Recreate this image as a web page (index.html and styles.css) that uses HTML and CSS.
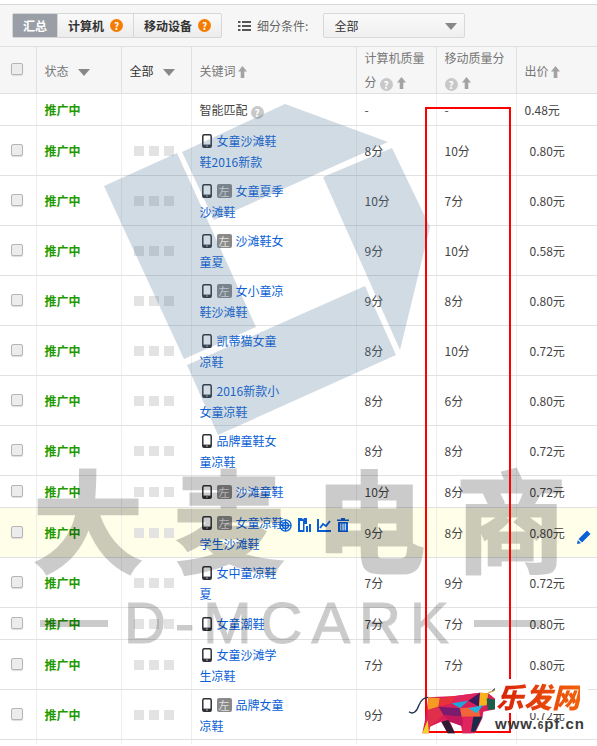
FILE: index.html
```html
<!doctype html>
<html lang="zh-CN">
  <head>
    <meta charset="UTF-8" />
    <title>关键词列表</title>
    <link rel="stylesheet" href="styles.css">
  </head>
  <body>
    <svg class="defs" width="0" height="0">
      <symbol id="phone" viewBox="0 0 10 14">
        <rect x="0.8" y="0.7" width="8.4" height="12.6" rx="1.6" fill="#fff" stroke="#2f3338" stroke-width="1.5" />
        <rect x="0.8" y="10.6" width="8.4" height="2.7" fill="#2f3338" />
        <circle cx="5" cy="12" r="0.7" fill="#ddd" />
      </symbol>
      <symbol id="up" viewBox="0 0 9 12">
        <path d="M4.5 0 9 5.5H6.3V12H2.7V5.5H0z" fill="#a3a3a3" />
      </symbol>
    </svg>

    <div class="toolbar">
      <div class="tabs">
        <span class="tab active">汇总</span>
        <span class="tab">计算机<i class="help orange">?</i></span>
        <span class="tab">移动设备<i class="help orange">?</i></span>
      </div>
      <svg class="list-icon" width="13" height="10" viewBox="0 0 13 10">
        <path d="M0 0h2.5v2H0zM4 0h9v2H4zM0 4h2.5v2H0zM4 4h9v2H4zM0 8h2.5v2H0zM4 8h9v2H4z" fill="#555" />
      </svg>
      <span class="filter-label">细分条件:</span>
      <div class="select">全部<i class="caret"></i></div>
    </div>

    <table class="grid">
      <colgroup>
        <col class="c-check" /><col class="c-status" /><col class="c-all" /><col class="c-word" />
        <col class="c-score" /><col class="c-score" /><col class="c-price" />
      </colgroup>
      <thead>
        <tr>
          <th><span class="check"></span></th>
          <th>状态<i class="caret"></i></th>
          <th class="dark">全部<i class="caret"></i></th>
          <th>关键词<svg class="up"><use href="#up" /></svg></th>
          <th class="tall"><div class="head-wrap">计算机质量分<i class="help grey">?</i><svg class="up"><use href="#up" /></svg></div></th>
          <th class="tall"><div class="head-wrap">移动质量分<br><i class="help grey first">?</i><svg class="up"><use href="#up" /></svg></div></th>
          <th>出价<svg class="up"><use href="#up" /></svg></th>
        </tr>
      </thead>
      <tbody>
        <tr class="short">
          <td></td><td class="status">推广中</td><td></td>
          <td>智能匹配<i class="help grey">?</i></td>
          <td>-</td><td>-</td><td class="first-price">0.48元</td>
        </tr>
        <tr>
          <td><span class="check"></span></td><td class="status">推广中</td>
          <td><div class="dots"><i></i><i></i><i></i></div></td>
          <td><div class="word"><svg class="phone"><use href="#phone" /></svg><a>女童沙滩鞋鞋2016新款</a></div></td>
          <td>8分</td><td>10分</td><td class="price">0.80元</td>
        </tr>
        <tr>
          <td><span class="check"></span></td><td class="status">推广中</td>
          <td><div class="dots"><i></i><i></i><i></i></div></td>
          <td><div class="word"><svg class="phone"><use href="#phone" /></svg><span class="badge">左</span><a>女童夏季沙滩鞋</a></div></td>
          <td>10分</td><td>7分</td><td class="price">0.80元</td>
        </tr>
        <tr>
          <td><span class="check"></span></td><td class="status">推广中</td>
          <td><div class="dots"><i></i><i></i><i></i></div></td>
          <td><div class="word"><svg class="phone"><use href="#phone" /></svg><span class="badge">左</span><a>沙滩鞋女童夏</a></div></td>
          <td>9分</td><td>10分</td><td class="price">0.58元</td>
        </tr>
        <tr>
          <td><span class="check"></span></td><td class="status">推广中</td>
          <td><div class="dots"><i></i><i></i><i></i></div></td>
          <td><div class="word"><svg class="phone"><use href="#phone" /></svg><span class="badge">左</span><a>女小童凉鞋沙滩鞋</a></div></td>
          <td>9分</td><td>8分</td><td class="price">0.80元</td>
        </tr>
        <tr>
          <td><span class="check"></span></td><td class="status">推广中</td>
          <td><div class="dots"><i></i><i></i><i></i></div></td>
          <td><div class="word"><svg class="phone"><use href="#phone" /></svg><a>凯蒂猫女童凉鞋</a></div></td>
          <td>8分</td><td>10分</td><td class="price">0.72元</td>
        </tr>
        <tr>
          <td><span class="check"></span></td><td class="status">推广中</td>
          <td><div class="dots"><i></i><i></i><i></i></div></td>
          <td><div class="word"><svg class="phone"><use href="#phone" /></svg><a>2016新款小女童凉鞋</a></div></td>
          <td>8分</td><td>6分</td><td class="price">0.80元</td>
        </tr>
        <tr>
          <td><span class="check"></span></td><td class="status">推广中</td>
          <td><div class="dots"><i></i><i></i><i></i></div></td>
          <td><div class="word"><svg class="phone"><use href="#phone" /></svg><a>品牌童鞋女童凉鞋</a></div></td>
          <td>8分</td><td>8分</td><td class="price">0.72元</td>
        </tr>
        <tr class="short">
          <td><span class="check"></span></td><td class="status">推广中</td>
          <td><div class="dots"><i></i><i></i><i></i></div></td>
          <td><div class="word"><svg class="phone"><use href="#phone" /></svg><span class="badge">左</span><a>沙滩童鞋</a></div></td>
          <td>10分</td><td>8分</td><td class="price">0.72元</td>
        </tr>
        <tr class="hover">
          <td><span class="check"></span></td><td class="status">推广中</td>
          <td><div class="dots"><i></i><i></i><i></i></div></td>
          <td class="word-cell">
            <div class="word"><svg class="phone"><use href="#phone" /></svg><span class="badge">左</span><a>女童凉鞋学生沙滩鞋</a></div>
            <div class="actions">
              <svg width="13" height="13" viewBox="0 0 13 13" fill="none" stroke="#0b5fd6" stroke-width="1.3"><circle cx="6.5" cy="6.5" r="5.6" /><circle cx="6.5" cy="6.5" r="3" /><path d="M1 6.5h11M6.5 1v11" /></svg>
              <svg width="13" height="14" viewBox="0 0 13 14"><path d="M0 0h4l1 1.5L6 0h3v6H6.500v8H0z" fill="#0b5fd6" /><path d="M2 3h3v9H2z" fill="#fff" /><path d="M8 8h2v6H8zM11 6h2v8h-2z" fill="#0b5fd6" /></svg>
              <svg width="14" height="13" viewBox="0 0 14 13" fill="none" stroke="#0b5fd6"><path d="M1 0v12h13" stroke-width="2" /><path d="M3 9l3-4 3 2 4-5" stroke-width="1.8" /></svg>
              <svg width="12" height="14" viewBox="0 0 12 14"><path d="M4 0h4v1.500h4V3H0V1.500h4zM1 4h10v10H1z" fill="#0b5fd6" /><path d="M3.300 5.500h1v7h-1zM5.500 5.500h1v7h-1zM7.700 5.500h1v7h-1z" fill="#fff" /></svg>
            </div>
          </td>
          <td>9分</td><td>8分</td>
          <td class="price price-cell">0.80元
            <svg class="pencil" width="14" height="14" viewBox="0 0 14 14"><path d="M10 0.500 13.500 4 5 12.500 1.500 9zM0.800 10 4 13.200 0 14z" fill="#0b5fd6" /></svg>
          </td>
        </tr>
        <tr>
          <td><span class="check"></span></td><td class="status">推广中</td>
          <td><div class="dots"><i></i><i></i><i></i></div></td>
          <td><div class="word"><svg class="phone"><use href="#phone" /></svg><a>女中童凉鞋夏</a></div></td>
          <td>7分</td><td>9分</td><td class="price">0.72元</td>
        </tr>
        <tr class="short">
          <td><span class="check"></span></td><td class="status">推广中</td>
          <td><div class="dots"><i></i><i></i><i></i></div></td>
          <td><div class="word"><svg class="phone"><use href="#phone" /></svg><a>女童潮鞋</a></div></td>
          <td>7分</td><td>7分</td><td class="price">0.80元</td>
        </tr>
        <tr>
          <td><span class="check"></span></td><td class="status">推广中</td>
          <td><div class="dots"><i></i><i></i><i></i></div></td>
          <td><div class="word"><svg class="phone"><use href="#phone" /></svg><a>女童沙滩学生凉鞋</a></div></td>
          <td>7分</td><td>7分</td><td class="price">0.80元</td>
        </tr>
        <tr>
          <td><span class="check"></span></td><td class="status">推广中</td>
          <td><div class="dots"><i></i><i></i><i></i></div></td>
          <td><div class="word"><svg class="phone"><use href="#phone" /></svg><span class="badge">左</span><a>品牌女童凉鞋</a></div></td>
          <td>9分</td><td>8分</td><td class="price">0.72元</td>
        </tr>
        <tr class="end">
          <td></td><td></td><td></td><td></td><td></td><td></td><td></td>
        </tr>
      </tbody>
    </table>

    <!-- watermark and annotations that sit on top of the screenshot -->
    <svg class="mark-logo" width="597" height="746" viewBox="0 0 597 746">
      <g fill="#466e93" fill-opacity="0.25">
        <polygon points="104,186 177,153 256,327 184,359" />
        <polygon points="182,152 285,104 388,142 214,220" />
        <polygon points="392,148 430,227 400,350 323,177" />
        <polygon points="365,286 396,355 218,435 187,365" />
      </g>
    </svg>
    <div class="mark-cn"><span>大</span><span>麦</span><span>电</span><span>商</span></div>
    <div class="mark-en"><i></i><span>D-MCARK</span><i></i></div>
    <div class="red-box"></div>

    <div class="brand">
      <svg class="bull" width="100" height="66" viewBox="0 0 300 198">
        <path d="M12 125C25 135 35 125 42 105 48 90 55 82 70 82" fill="none" stroke="#20304f" stroke-width="4" />
        <path d="M250 68C268 66 278 55 284 35" fill="none" stroke="#c9a227" stroke-width="4" />
        <path d="M262 62C272 58 275 48 275 38" fill="none" stroke="#20304f" stroke-width="3" />
        <polygon points="70,82 150,78 225,68 250,70 275,90 270,118 235,125 232,145 210,190 172,190 168,165 135,155 150,190 128,190 108,155 75,170 72,190 52,190 64,130" fill="#d81f5a" />
        <polygon points="70,82 105,85 100,110 68,120" fill="#f59a23" />
        <polygon points="105,85 150,78 140,100 100,110" fill="#e8323c" />
        <polygon points="150,78 225,68 190,92 140,100" fill="#e0245e" />
        <polygon points="140,100 190,92 165,115" fill="#1fa7dc" />
        <polygon points="225,68 222,110 190,92" fill="#3a1c5c" />
        <polygon points="225,68 250,70 245,105 222,110" fill="#f7b21c" />
        <polygon points="245,85 275,90 270,118 248,120" fill="#1d5c4a" />
        <polygon points="100,110 165,115 170,140 115,135" fill="#7a1b6e" />
        <polygon points="68,120 100,110 115,135 75,170 70,190" fill="#e02f4a" />
        <polygon points="52,190 68,150 72,190" fill="#f5d327" />
        <polygon points="115,135 170,140 175,170 135,155" fill="#c2185b" />
        <polygon points="110,155 130,150 150,190 128,190" fill="#2d1b33" />
        <polygon points="165,115 222,110 225,140 170,140" fill="#f2643a" />
        <polygon points="190,115 235,105 215,130" fill="#22b5e0" />
        <polygon points="175,140 205,140 200,190 172,190" fill="#e0245e" />
        <polygon points="205,140 232,140 210,185 198,185" fill="#1d2b4a" />
      </svg>
      <div class="brand-text">
        <div class="brand-name"><span>乐发网</span></div>
        <div class="brand-url">www.<small>6</small>pf.cn</div>
      </div>
    </div>
  </body>
</html>
```

FILE: styles.css
```css
html,
body {
  margin: 0;
  height: 746px;
  overflow: hidden;
}
body {
  position: relative;
  background: #fff;
  padding-top: 4px;
  box-sizing: border-box;
  font-family: "Noto Sans CJK SC", "Liberation Sans", sans-serif;
  font-size: 12px;
  color: #444;
}
.defs {
  position: absolute;
}
i {
  font-style: normal;
}

/* toolbar */
.toolbar {
  display: flex;
  align-items: center;
  height: 41px;
  padding-left: 12px;
  background: #f6f6f6;
  border-top: 1px solid #d8d8d8;
}
.tabs {
  display: flex;
  height: 23px;
  border: 1px solid #d6d6d6;
  border-radius: 2px;
  background: linear-gradient(#fafafa, #ececec);
}
.tab {
  display: flex;
  align-items: center;
  padding: 0 10px;
  font-weight: 700;
  color: #333;
  border-left: 1px solid #d6d6d6;
}
.tab:first-child {
  border-left: none;
}
.tab.active {
  background: #9a9ea6;
  color: #fff;
}
.help {
  display: inline-block;
  width: 13px;
  height: 13px;
  line-height: 13px;
  margin-left: 3px;
  border-radius: 50%;
  text-align: center;
  font-size: 10px;
  font-weight: 700;
  color: #fff;
  vertical-align: -2px;
}
.help.orange {
  margin-left: 6px;
  background: #f57c00;
}
.help.grey {
  background: #c8c8c8;
}
.help.first {
  margin-left: 0;
}
.list-icon {
  margin-left: 16px;
}
.filter-label {
  margin-left: 6px;
  color: #666;
}
.select {
  position: relative;
  width: 130px;
  height: 23px;
  line-height: 23px;
  margin-left: 15px;
  padding-left: 10px;
  border: 1px solid #d8d8d8;
  border-radius: 2px;
  background: linear-gradient(#fafafa, #efefef);
  color: #333;
}
.caret {
  display: inline-block;
  width: 0;
  height: 0;
  margin-left: 9px;
  border-left: 6px solid transparent;
  border-right: 6px solid transparent;
  border-top: 7px solid #888;
  vertical-align: 0;
}
.select .caret {
  position: absolute;
  right: 7px;
  top: 9px;
}

/* table */
.grid {
  width: 597px;
  table-layout: fixed;
  border-collapse: collapse;
}
.c-check {
  width: 36px;
}
.c-status {
  width: 85px;
}
.c-all {
  width: 70px;
}
.c-word {
  width: 165px;
}
.c-score {
  width: 80px;
}
.c-price {
  width: 81px;
}
th {
  height: 46px;
  padding: 0 0 0 8px;
  background: #f6f6f6;
  border: 1px solid #e0e0e0;
  text-align: left;
  font-weight: 400;
  color: #777;
}
th.dark {
  color: #333;
}
.head-wrap {
  width: 64px;
  margin: -2px 0;
  line-height: 24px;
}
th:first-child,
td:first-child {
  padding-left: 11px;
  border-left: none;
}
th:last-child,
td:last-child {
  border-right: none;
}
td {
  height: 49px;
  padding: 0 0 0 8px;
  border: 1px solid #eee;
  border-top: 1px solid #e1e1e1;
  border-bottom: 1px solid #e1e1e1;
}
.short td {
  height: 31px;
}
.end td {
  height: 4px;
  border-bottom: none;
}
.hover td {
  background: #fffee9;
}
.status {
  font-weight: 700;
  color: #1f9a00;
}
.check {
  display: block;
  box-sizing: border-box;
  width: 12px;
  height: 12px;
  margin-top: -2px;
  border: 1px solid #b5b5b5;
  border-radius: 2px;
  background: #ececec;
  box-shadow: 0 1px 1px #ddd;
}
.dots {
  display: flex;
  gap: 5px;
  padding-left: 4px;
}
.dots i {
  width: 10px;
  height: 10px;
  background: #e3e3e3;
}
.up {
  width: 9px;
  height: 12px;
  margin-left: 2px;
  vertical-align: -2px;
}
th .help + .up {
  margin-left: 4px;
}
.word {
  width: 88px;
  line-height: 21px;
}
.word a {
  color: #0b5fd6;
}
.phone {
  width: 10px;
  height: 14px;
  margin: 0 5px 0 2px;
  vertical-align: -2px;
}
.badge {
  display: inline-block;
  width: 15px;
  height: 14px;
  line-height: 14px;
  margin-right: 4px;
  border-radius: 2px;
  background: #8a8a8a;
  color: #e4e4e4;
  text-align: center;
  font-size: 11px;
}
.price {
  padding-left: 13px;
}
.first-price {
  padding-left: 8px;
}
.word-cell,
.price-cell {
  position: relative;
}
.actions {
  position: absolute;
  left: 87px;
  top: 10px;
  display: flex;
  align-items: center;
  gap: 6px;
}
.pencil {
  position: absolute;
  right: 6px;
  top: 22px;
}

/* overlays */
.mark-logo {
  position: absolute;
  left: 0;
  top: 0;
  pointer-events: none;
}
.mark-cn {
  position: absolute;
  left: 33px;
  top: 441px;
  display: flex;
  gap: 31px;
  font-size: 110px;
  line-height: 150px;
  font-weight: 700;
  color: #000;
  -webkit-text-stroke: 3px #000;
  opacity: 0.2;
  pointer-events: none;
}
.mark-en {
  position: absolute;
  left: 40px;
  top: 590px;
  display: flex;
  align-items: center;
  gap: 16px;
  font-family: "Liberation Sans", sans-serif;
  font-size: 58px;
  line-height: 66px;
  letter-spacing: 9px;
  color: #000;
  -webkit-text-stroke: 1.2px #000;
  opacity: 0.2;
  pointer-events: none;
}
.mark-en i {
  flex: none;
  width: 68px;
  height: 7px;
  background: #000;
}
.red-box {
  position: absolute;
  left: 425px;
  top: 107px;
  width: 82px;
  height: 622px;
  border: 2px solid #f00;
  pointer-events: none;
}
.brand {
  position: absolute;
  left: 405px;
  top: 670px;
  display: flex;
}
.bull {
  flex: none;
  margin-right: -10px;
}
.brand-text {
  padding-top: 9px;
}
.brand-name {
  width: 92px;
  height: 34px;
  background: #fff;
  padding-left: 1px;
}
.brand-name span {
  font-size: 28px;
  line-height: 34px;
  font-weight: 900;
  font-style: italic;
  background: linear-gradient(90deg, #d8200a, #f2620a);
  -webkit-background-clip: text;
  background-clip: text;
  color: transparent;
}
.brand-url {
  margin-top: 2px;
  font-family: "Liberation Sans", sans-serif;
  font-size: 15px;
  line-height: 17px;
  font-weight: 700;
  letter-spacing: 1px;
  color: #3a3a3a;
}
.brand-url small {
  font-size: 10px;
}
```
